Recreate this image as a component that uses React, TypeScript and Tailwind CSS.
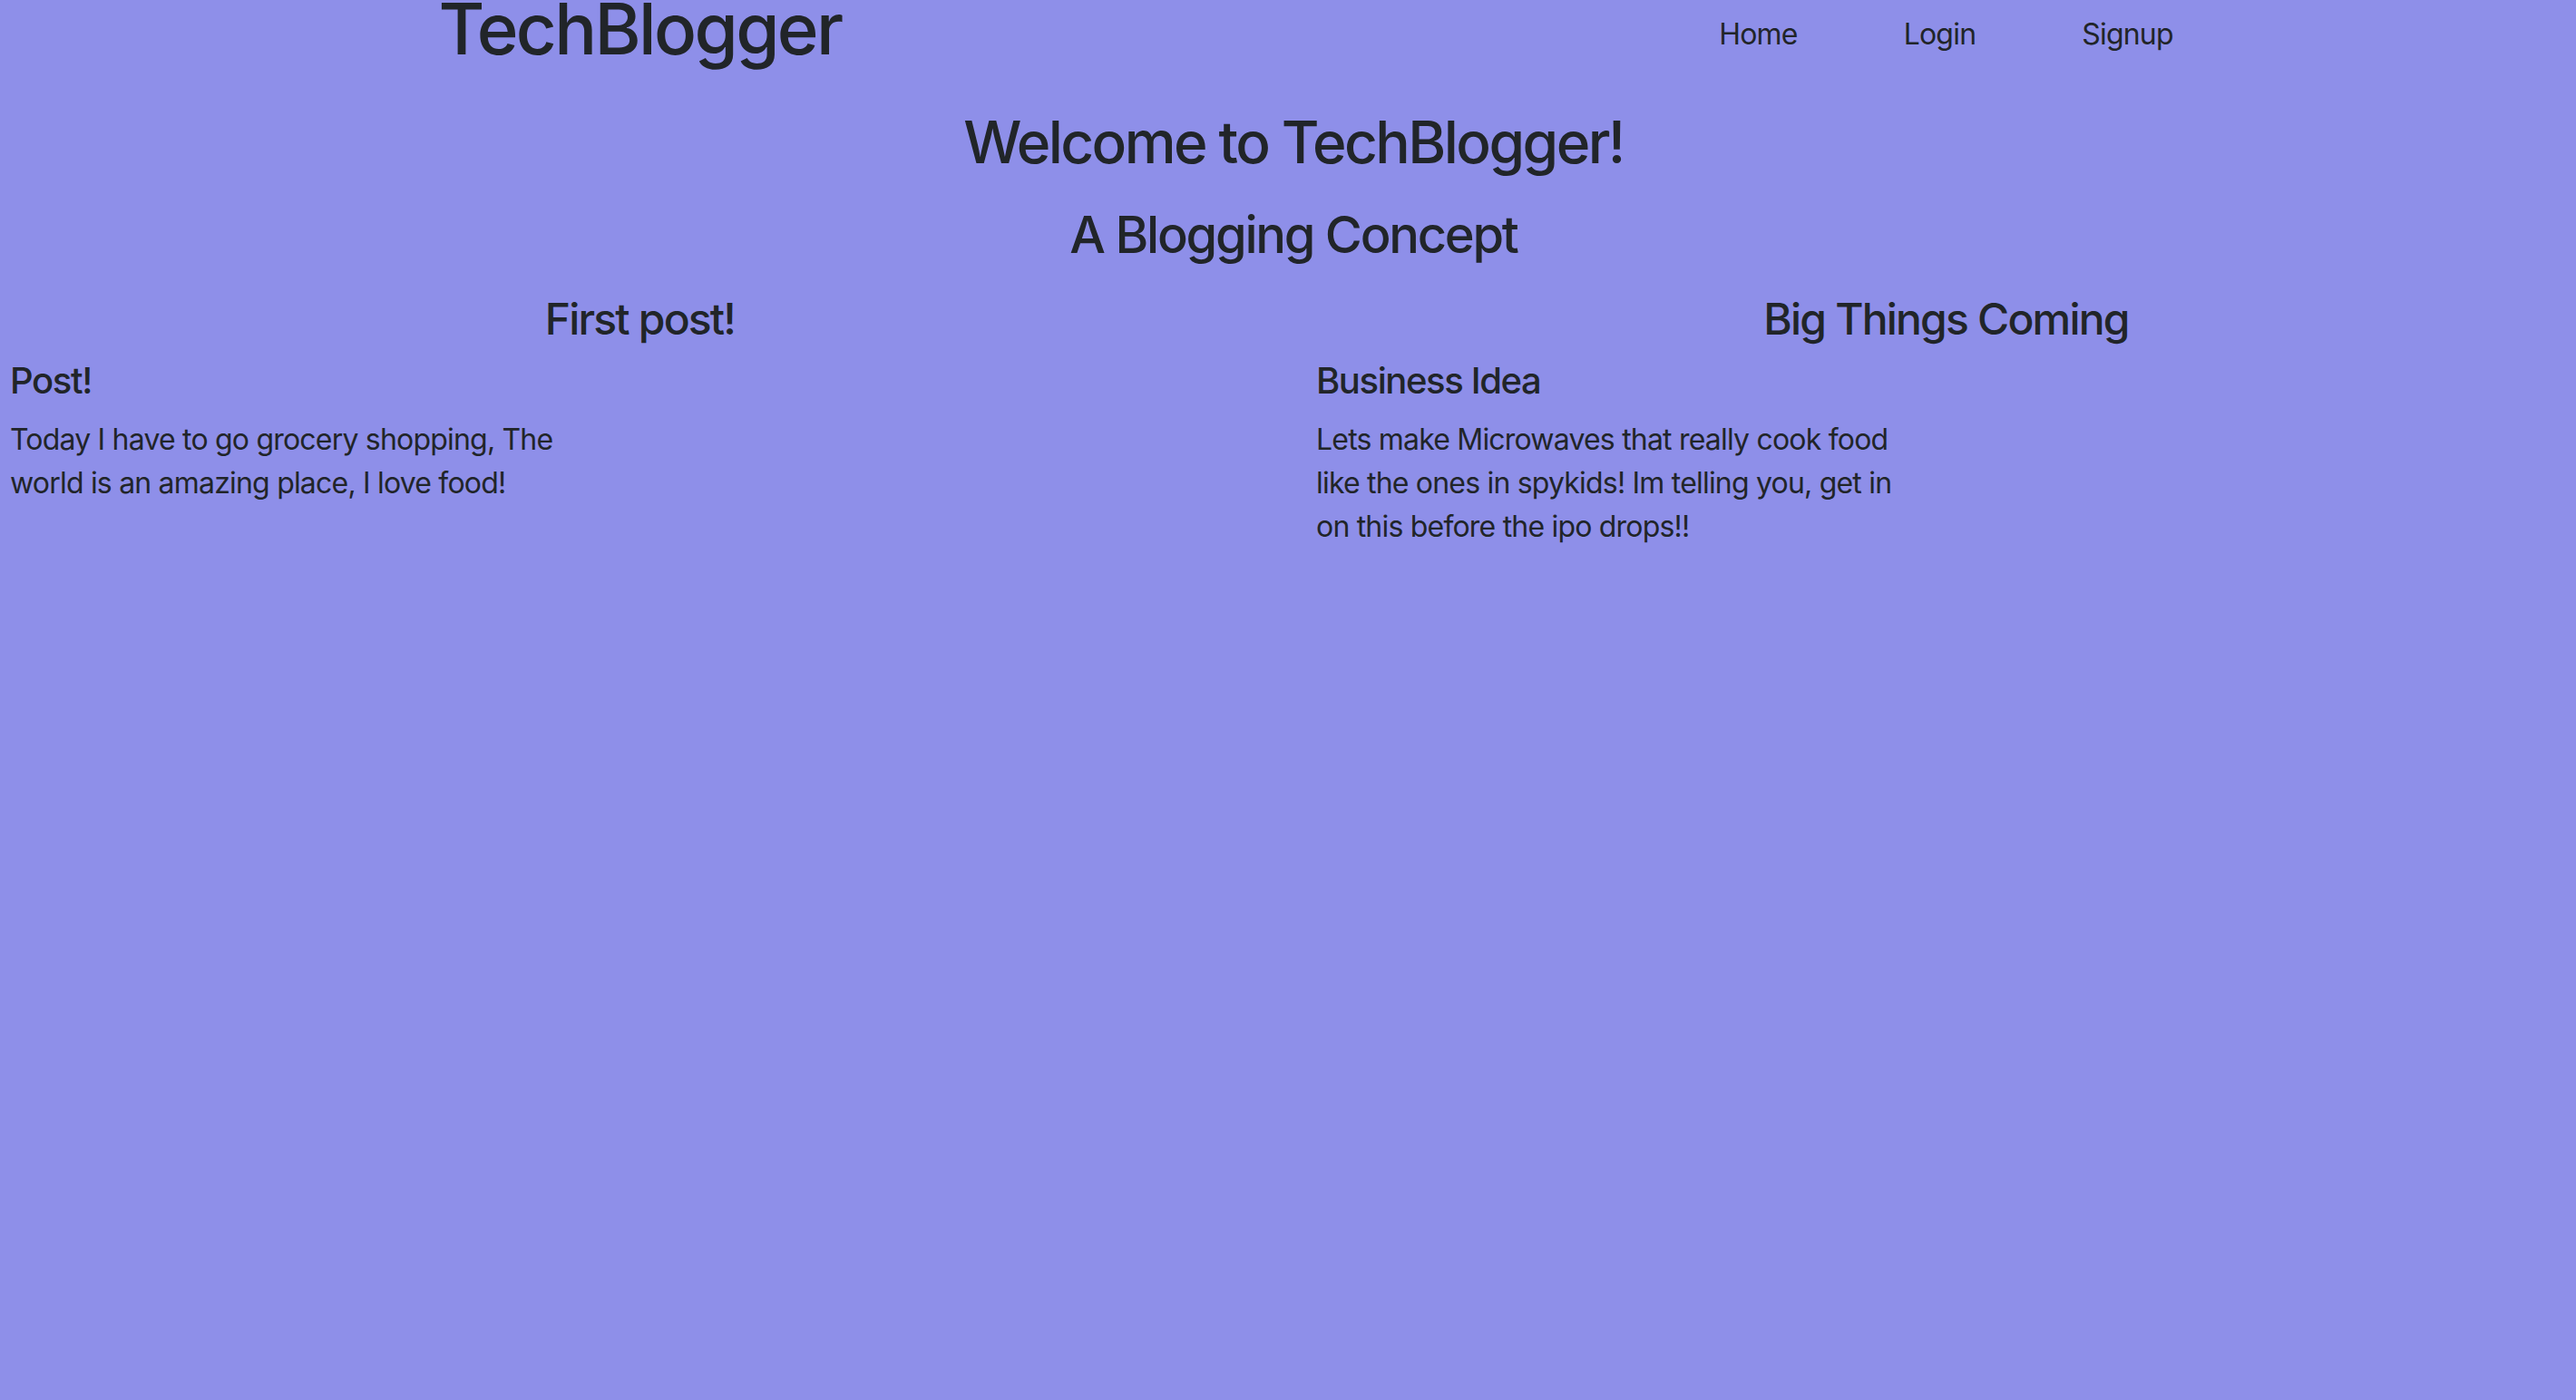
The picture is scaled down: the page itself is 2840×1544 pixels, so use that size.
const posts = [
  {
    heading: "First post!",
    title: "Post!",
    body: "Today I have to go grocery shopping, The world is an amazing place, I love food!",
  },
  {
    heading: "Big Things Coming",
    title: "Business Idea",
    body: "Lets make Microwaves that really cook food like the ones in spykids! Im telling you, get in on this before the ipo drops!!",
  },
];

export default function App() {
  return (
    <div className="min-h-screen bg-[#8e8fe9] text-[#212529] font-['Inter','Liberation_Sans',sans-serif]">
      {/* header */}
      <header className="grid grid-cols-[1389px_1389px] gap-x-[51px] pl-[11px] items-start">
        <h1 className="text-center text-[78px] leading-[64px] font-medium tracking-[-0.034em]">TechBlogger</h1>
        <nav className="mt-[14px] flex justify-center gap-x-[117px] text-[32px] leading-[48px] tracking-[-0.025em]">
          <a href="#">Home</a>
          <a href="#">Login</a>
          <a href="#">Signup</a>
        </nav>
      </header>

      <h2 className="mt-[54px] pl-[12px] text-center text-[64px] leading-[77px] font-medium tracking-[-0.04em]">
        Welcome to TechBlogger!
      </h2>
      <h3 className="mt-[31px] pl-[12px] text-center text-[56px] leading-[67px] font-medium tracking-[-0.04em]">
        A Blogging Concept
      </h3>

      <main className="mt-[30px] grid grid-cols-[1389px_1389px] gap-x-[51px] pl-[11px]">
        {posts.map((p) => (
          <section key={p.title}>
            <h4 className="text-center text-[48px] leading-[58px] font-medium tracking-[-0.038em]">{p.heading}</h4>
            <h5 className="mt-[15px] text-[40px] leading-[48px] font-medium tracking-[-0.035em]">{p.title}</h5>
            <p className="mt-[17px] max-w-[665px] text-[32px] leading-[48px] tracking-[-0.025em]">{p.body}</p>
          </section>
        ))}
      </main>
    </div>
  );
}
